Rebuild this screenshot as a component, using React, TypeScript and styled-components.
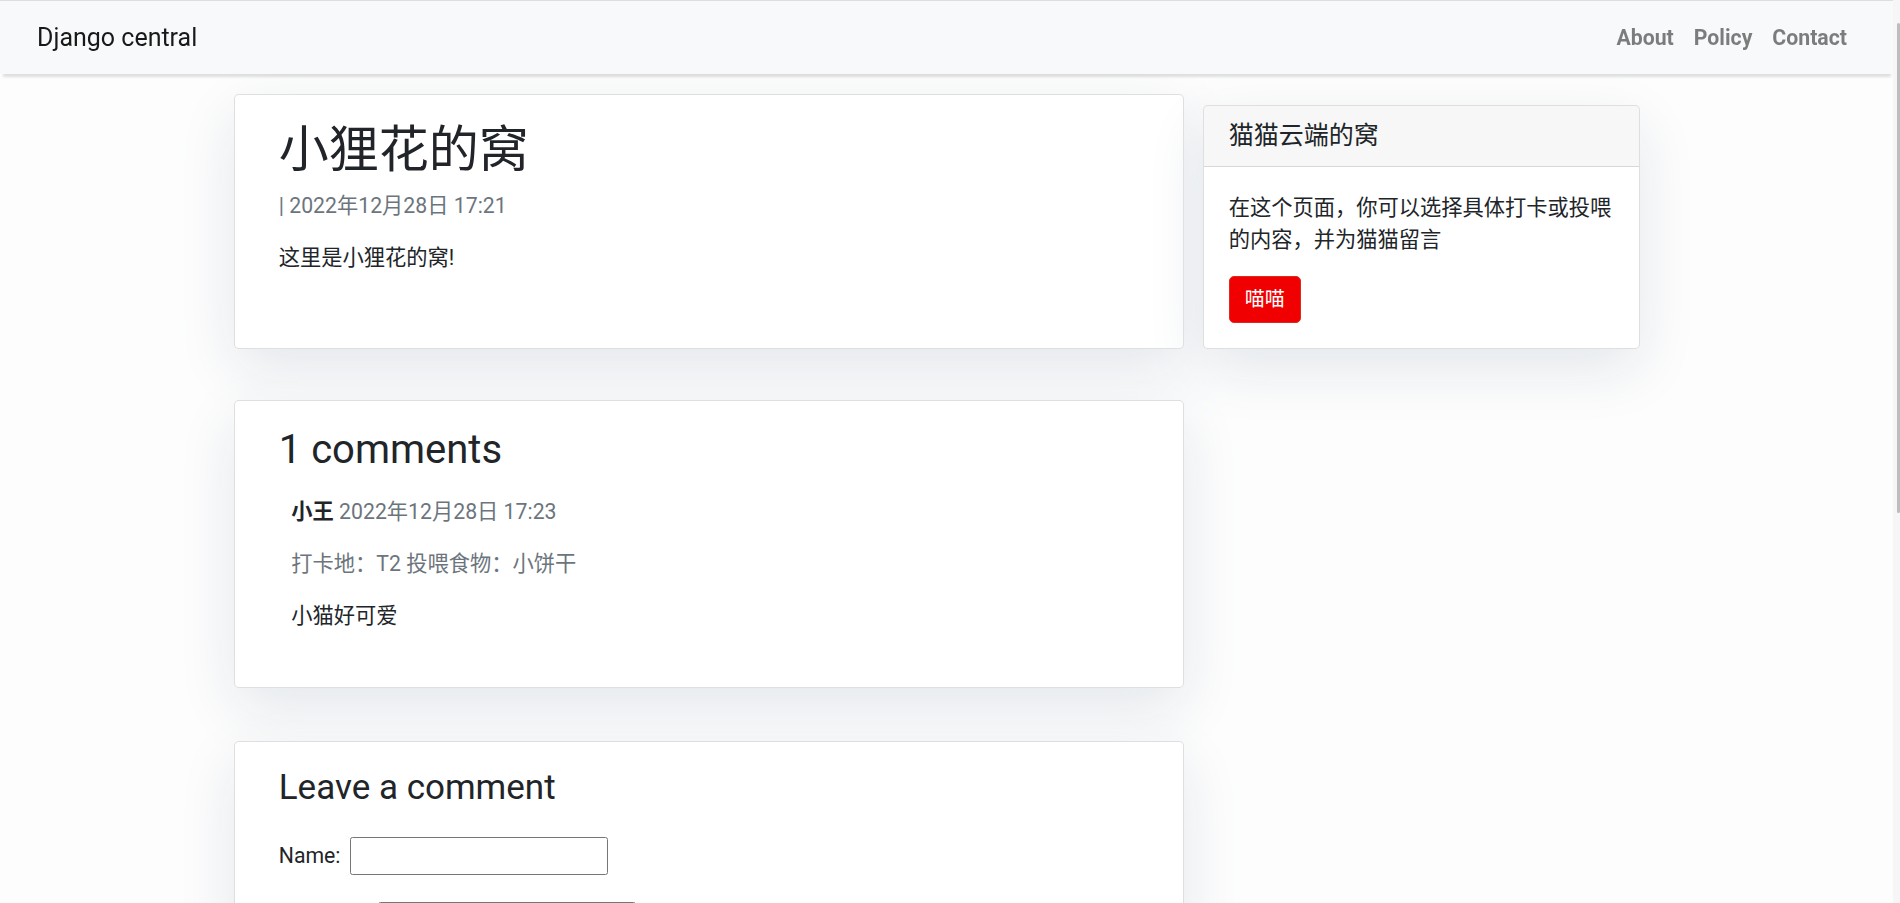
import React from "react";
import styled, { createGlobalStyle } from "styled-components";

const GlobalStyle = createGlobalStyle`
  * { box-sizing: border-box; }
  html, body { margin: 0; padding: 0; overflow: hidden; }
  body {
    background: #fdfdfd;
    font-family: Roboto, "Noto Sans CJK SC", sans-serif;
    font-size: 21.25px;
    line-height: 1.5;
    color: #212529;
  }
`;

const Page = styled.div`
  margin-right: 7px;
  min-height: 903px;
`;

const Navbar = styled.nav`
  position: relative;
  z-index: 1;
  height: 74px;
  border-top: 1px solid #dedede;
  background: #f8f9fa;
  display: flex;
  align-items: center;
  justify-content: space-between;
  padding: 0 36px 0 37px;
  box-shadow: 0 5px 2.5px -2.5px rgba(0, 0, 0, 0.12);
`;

const Brand = styled.a`
  font-size: 25px;
  line-height: 37.5px;
  color: rgba(0, 0, 0, 0.9);
  text-decoration: none;
`;

const NavLinks = styled.ul`
  display: flex;
  list-style: none;
  margin: 0;
  padding: 0;
`;

const NavLink = styled.a`
  display: block;
  padding: 0 10px;
  font-weight: 700;
  font-size: 21.25px;
  color: rgba(0, 0, 0, 0.5);
  text-decoration: none;
`;

const Container = styled.main`
  width: 1425px;
  margin: 0 auto;
  display: grid;
  grid-template-columns: 950px 475px;
  align-items: start;
`;

const Card = styled.section<{ $mt: number; $mb: number; $pb: number }>`
  grid-column: 1;
  margin: ${(p) => p.$mt}px 0 ${(p) => p.$mb}px;
  background: #fff;
  border: 1px solid rgba(0, 0, 0, 0.125);
  border-radius: 5px;
  box-shadow: 0 20px 60px #e3e7eb;
  padding: 25px 43.75px ${(p) => p.$pb}px;
`;

const Title = styled.h1`
  margin: 0 0 10px;
  font-size: 50px;
  font-weight: 400;
  line-height: 1.2;
`;

const Heading = styled.h2<{ $size: number }>`
  margin: 0 0 10px;
  font-size: ${(p) => p.$size}px;
  font-weight: 400;
  line-height: 1.2;
`;

const Text = styled.p<{ $muted?: boolean }>`
  margin: 0 0 20px;
  color: ${(p) => (p.$muted ? "#6c757d" : "#212529")};
`;

const Strong = styled.span`
  font-weight: 700;
`;

const Muted = styled.span`
  color: #6c757d;
  font-weight: 400;
`;

const Comment = styled.div`
  padding: 12.5px;
`;

const Side = styled.aside`
  grid-column: 2;
  grid-row: 1;
  padding: 0 18.75px;
`;

const SideCard = styled.div`
  margin: 31px 0 30px;
  background: #fff;
  border: 1px solid rgba(0, 0, 0, 0.125);
  border-radius: 5px;
  box-shadow: 0 20px 60px #e3e7eb;
  overflow: hidden;
`;

const SideHeader = styled.h5`
  margin: 0;
  padding: 15px 25px;
  font-size: 25px;
  font-weight: 400;
  line-height: 1.2;
  background: rgba(0, 0, 0, 0.03);
  border-bottom: 1px solid rgba(0, 0, 0, 0.125);
`;

const SideBody = styled.div`
  padding: 25px;
`;

const DangerButton = styled.a`
  display: inline-block;
  padding: 7.5px 15px;
  font-size: 20px;
  line-height: 1.5;
  color: #fff;
  background: #f00000;
  border: 1px solid #dc281e;
  border-radius: 5px;
  text-decoration: none;
`;

const Form = styled.form`
  margin-top: 28px;
`;

const FieldRow = styled.p`
  display: flex;
  align-items: center;
  gap: 9px;
  margin: 0 0 27px;
`;

const Label = styled.label`
  font-size: 21.25px;
`;

const Input = styled.input`
  width: 258px;
  height: 38px;
  border: 1px solid #767676;
  border-radius: 2.5px;
  background: #fff;
  padding: 1px 3px;
`;

const ScrollTrack = styled.div`
  position: fixed;
  top: 0;
  right: 0;
  width: 7px;
  height: 100%;
  background: #f6f6f6;
`;

const ScrollThumb = styled.div`
  margin: 23px 0 0 4px;
  width: 3px;
  height: 490px;
  border-radius: 2px;
  background: #bdbdbd;
`;

export default function App() {
  return (
    <>
      <GlobalStyle />
      <Page>
        <Navbar>
          <Brand href="#">Django central</Brand>
          <NavLinks>
            <li><NavLink href="#">About</NavLink></li>
            <li><NavLink href="#">Policy</NavLink></li>
            <li><NavLink href="#">Contact</NavLink></li>
          </NavLinks>
        </Navbar>
        <Container>
          <Card $mt={20} $mb={32} $pb={54}>
            <Title>小狸花的窝</Title>
            <Text $muted>| 2022年12月28日 17:21</Text>
            <Text>这里是小狸花的窝!</Text>
          </Card>
          <Side>
            <SideCard>
              <SideHeader>猫猫云端的窝</SideHeader>
              <SideBody>
                <Text>在这个页面，你可以选择具体打卡或投喂的内容，并为猫猫留言</Text>
                <DangerButton href="#">喵喵</DangerButton>
              </SideBody>
            </SideCard>
          </Side>
          <Card $mt={19} $mb={32} $pb={23}>
            <Heading $size={40}>1 comments</Heading>
            <Comment>
              <Text>
                <Strong>小王</Strong> <Muted>2022年12月28日 17:23</Muted>
              </Text>
              <Text $muted>打卡地：T2 投喂食物：小饼干</Text>
              <Text>小猫好可爱</Text>
            </Comment>
          </Card>
          <Card $mt={21} $mb={32} $pb={25}>
            <Heading $size={35}>Leave a comment</Heading>
            <Form>
              <FieldRow>
                <Label htmlFor="name">Name:</Label>
                <Input id="name" type="text" />
              </FieldRow>
              <FieldRow>
                <Label htmlFor="food">投喂食物:</Label>
                <Input id="food" type="text" />
              </FieldRow>
              <FieldRow>
                <Label htmlFor="body">Body:</Label>
                <Input id="body" type="text" />
              </FieldRow>
            </Form>
          </Card>
        </Container>
      </Page>
      <ScrollTrack>
        <ScrollThumb />
      </ScrollTrack>
    </>
  );
}
